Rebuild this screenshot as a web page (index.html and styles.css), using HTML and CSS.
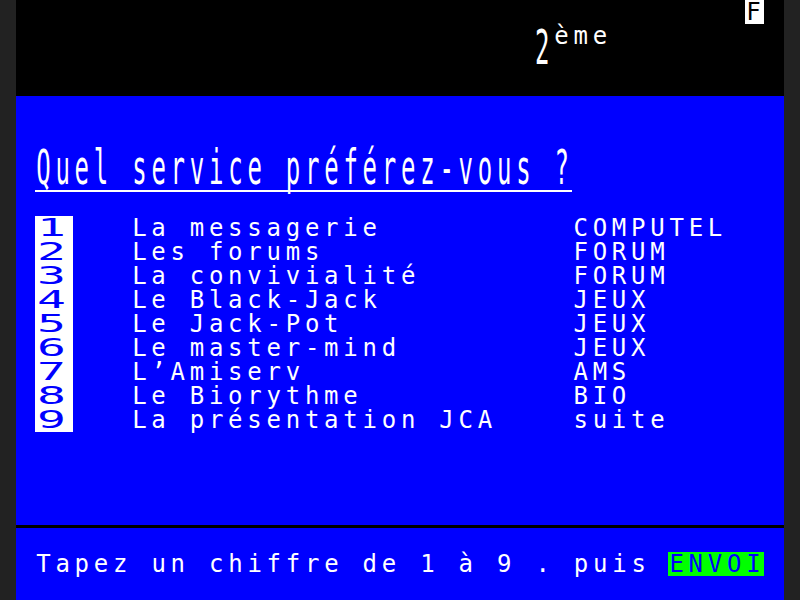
FILE: index.html
```html
<!DOCTYPE html>
<html lang="fr">
<head>
<meta charset="utf-8">
<title>Minitel</title>
<link rel="stylesheet" href="styles.css">
</head>
<body>
<div class="screen">
  <header class="top cells">
    <span class="t f-tag">F</span>
    <span class="t page-num">2</span>
    <span class="t page-sup">ème</span>
  </header>
  <main class="body cells">
    <h1 class="t title">Quel service préférez-vous ?</h1>
    <ol class="menu">
      <li class="cells"><span class="t num">1</span><span class="t label">La messagerie</span><span class="t svc">COMPUTEL</span></li>
      <li class="cells"><span class="t num">2</span><span class="t label">Les forums</span><span class="t svc">FORUM</span></li>
      <li class="cells"><span class="t num">3</span><span class="t label">La convivialité</span><span class="t svc">FORUM</span></li>
      <li class="cells"><span class="t num">4</span><span class="t label">Le Black-Jack</span><span class="t svc">JEUX</span></li>
      <li class="cells"><span class="t num">5</span><span class="t label">Le Jack-Pot</span><span class="t svc">JEUX</span></li>
      <li class="cells"><span class="t num">6</span><span class="t label">Le master-mind</span><span class="t svc">JEUX</span></li>
      <li class="cells"><span class="t num">7</span><span class="t label">L’Amiserv</span><span class="t svc">AMS</span></li>
      <li class="cells"><span class="t num">8</span><span class="t label">Le Biorythme</span><span class="t svc">BIO</span></li>
      <li class="cells"><span class="t num">9</span><span class="t label">La présentation JCA</span><span class="t svc">suite</span></li>
    </ol>
  </main>
  <footer class="foot cells">
    <span class="t hint">Tapez un chiffre de 1 à 9 . puis</span>
    <span class="t send">ENVOI</span>
  </footer>
</div>
</body>
</html>
```
FILE: styles.css
```css
* {
  box-sizing: border-box;
  margin: 0;
  padding: 0;
}

html,
body {
  background: #222222;
}

body {
  width: 800px;
  height: 600px;
  overflow: hidden;
  font-family: "DejaVu Sans Mono", monospace;
  font-size: 24px;
  font-weight: normal;
  line-height: 24px;
  color: #ffffff;
}

.screen {
  width: 768px;
  height: 600px;
  margin: 0 16px;
}

.cells {
  display: grid;
  grid-template-columns: repeat(40, 19.2px);
  grid-auto-rows: 24px;
}

.t {
  display: block;
  height: 24px;
  white-space: pre;
  letter-spacing: calc(19.2px - 1ch);
  padding-left: 1px;
  font-size: 24px;
  font-weight: normal;
}

/* header (black band) */
.top {
  background: #000000;
  grid-template-rows: repeat(4, 24px);
}

.f-tag {
  grid-row: 1;
  grid-column: 39;
  background: #ffffff;
  color: #000000;
}

.page-num {
  grid-row: 3;
  grid-column: 28;
  transform: scaleY(2);
  transform-origin: bottom;
}

.page-sup {
  grid-row: 2;
  grid-column: 29 / span 3;
}

/* main (blue page) */
.body {
  background: #0000ff;
  grid-template-rows: repeat(18, 24px);
  box-shadow: inset 0 -3px 0 #000000;
}

.title {
  grid-row: 4;
  grid-column: 2 / span 28;
  transform: scaleY(2);
  transform-origin: bottom;
  box-shadow: inset 0 -1px 0 #ffffff;
}

.menu {
  grid-row: 6 / span 9;
  grid-column: 1 / -1;
  list-style: none;
}

.num {
  grid-column: 2;
  background: #ffffff;
  color: #0000ff;
  transform: scaleX(2);
  transform-origin: left;
}

.label {
  grid-column: 7 / span 22;
}

.svc {
  grid-column: 30 / span 11;
}

/* footer */
.foot {
  background: #0000ff;
  grid-template-rows: repeat(3, 24px);
}

.hint {
  grid-row: 2;
  grid-column: 2 / span 33;
}

.send {
  grid-row: 2;
  grid-column: 35 / span 5;
  background: #00ff00;
  color: #0000ff;
}
```
